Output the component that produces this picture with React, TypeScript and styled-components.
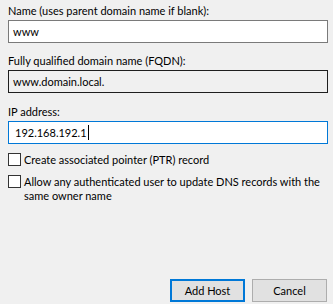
import React from "react";
import styled, { createGlobalStyle } from "styled-components";

const Global = createGlobalStyle`
  html, body { margin: 0; padding: 0; background: #f0f0f0; }
  body { font-family: Lato, "Noto Sans", sans-serif; font-size: 11px; color: #000; }
`;

const Dialog = styled.div`
  width: 333px;
  height: 304px;
  box-sizing: border-box;
  padding: 3px 6px 0 8px;
  display: flex;
  flex-direction: column;
  background: #f0f0f0;
`;

const Label = styled.div<{ $top: number }>`
  margin-top: ${(p) => p.$top}px;
  height: 15px;
  line-height: 15px;
  white-space: nowrap;
`;

const Field = styled.div<{ $variant: "normal" | "readonly" | "focus" }>`
  margin-top: 2px;
  height: 23px;
  box-sizing: border-box;
  width: 320px;
  display: flex;
  align-items: center;
  padding-left: ${(p) => (p.$variant === "focus" ? 6 : 4)}px;
  border: 1px solid
    ${(p) =>
      p.$variant === "focus" ? "#0078d7" : p.$variant === "readonly" ? "#1e1e1e" : "#7a7a7a"};
  background: ${(p) => (p.$variant === "readonly" ? "#f0f0f0" : "#fff")};
  white-space: nowrap;
`;

const IpText = styled.span`
  letter-spacing: 0;
`;

const Caret = styled.span`
  display: inline-block;
  width: 1px;
  height: 15px;
  background: #000;
  margin-left: 1px;
`;

const CheckRow = styled.label<{ $top: number }>`
  margin-top: ${(p) => p.$top}px;
  display: flex;
  align-items: flex-start;
  gap: 3px;
  line-height: 14px;
`;

const Box = styled.span`
  flex: none;
  width: 13px;
  height: 13px;
  box-sizing: border-box;
  border: 1px solid #333;
  background: #fff;
`;

const Spacer = styled.div`
  flex: 1;
`;

const Buttons = styled.div`
  display: flex;
  justify-content: flex-end;
  gap: 7px;
  margin-bottom: 2px;
`;

const Button = styled.button<{ $default?: boolean }>`
  width: 75px;
  height: 23px;
  box-sizing: border-box;
  font: inherit;
  color: #000;
  background: #e1e1e1;
  border: ${(p) => (p.$default ? "2px solid #0078d7" : "1px solid #adadad")};
  padding: 0;
`;

export default function App() {
  return (
    <>
      <Global />
      <Dialog>
        <Label $top={0}>Name (uses parent domain name if blank):</Label>
        <Field $variant="normal">www</Field>
        <Label $top={10}>Fully qualified domain name (FQDN):</Label>
        <Field $variant="readonly">www.domain.local.</Field>
        <Label $top={11}>IP address:</Label>
        <Field $variant="focus">
          <IpText>192.168.192.1</IpText>
          <Caret />
        </Field>
        <CheckRow $top={9}>
          <Box />
          <span>Create associated pointer (PTR) record</span>
        </CheckRow>
        <CheckRow $top={8}>
          <Box />
          <span>Allow any authenticated user to update DNS records with the same owner name</span>
        </CheckRow>
        <Spacer />
        <Buttons>
          <Button $default>Add Host</Button>
          <Button>Cancel</Button>
        </Buttons>
      </Dialog>
    </>
  );
}
